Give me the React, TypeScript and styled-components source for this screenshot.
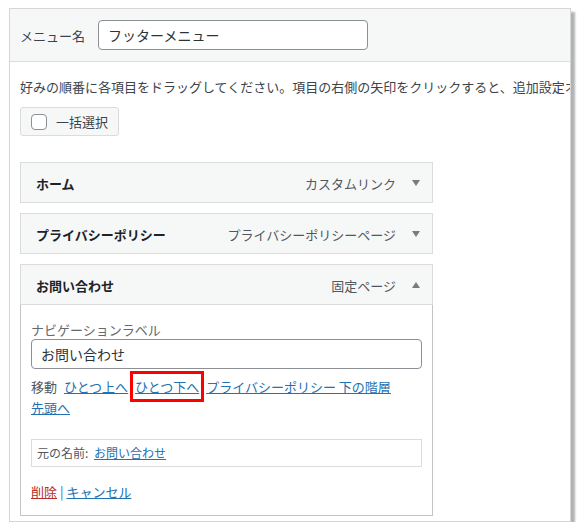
import styled, { createGlobalStyle } from 'styled-components';

const GlobalStyle = createGlobalStyle`
  * { box-sizing: border-box; }
  body {
    margin: 0;
    background: #fff;
    font-family: "Noto Sans CJK JP", "Noto Sans", sans-serif;
    font-size: 13px;
    color: #3c434a;
  }
`;

const items = [
  { title: 'ホーム', type: 'カスタムリンク', open: false },
  { title: 'プライバシーポリシー', type: 'プライバシーポリシーページ', open: false },
  { title: 'お問い合わせ', type: '固定ページ', open: true },
];

export default function App() {
  return (
    <>
      <GlobalStyle />
      <Frame>
        <Header>
          <Label>メニュー名</Label>
          <NameInput defaultValue="フッターメニュー" />
        </Header>

        <Content>
          <Description>
            好みの順番に各項目をドラッグしてください。項目の右側の矢印をクリックすると、追加設定オプションが表示されます。
          </Description>

          <BulkButton>
            <Check />
            <span>一括選択</span>
          </BulkButton>

          <MenuList>
            {items.map((item) => (
              <MenuItem key={item.title}>
                <Handle>
                  <ItemTitle>{item.title}</ItemTitle>
                  <Controls>
                    <span>{item.type}</span>
                    <Arrow $up={item.open} />
                  </Controls>
                </Handle>

                {item.open && (
                  <Settings>
                    <FieldLabel>ナビゲーションラベル</FieldLabel>
                    <LabelInput defaultValue="お問い合わせ" />

                    <MoveRow>
                      <span>移動</span>
                      <Link href="#">ひとつ上へ</Link>
                      <Link href="#" $marked>
                        ひとつ下へ
                      </Link>
                      <Link href="#">プライバシーポリシー 下の階層</Link>
                      <Link href="#">先頭へ</Link>
                    </MoveRow>

                    <Original>
                      元の名前: <Link href="#">お問い合わせ</Link>
                    </Original>

                    <Actions>
                      <Link href="#" $danger>
                        削除
                      </Link>{' '}
                      <Sep>|</Sep> <Link href="#">キャンセル</Link>
                    </Actions>
                  </Settings>
                )}
              </MenuItem>
            ))}
          </MenuList>
        </Content>
      </Frame>
    </>
  );
}

const Frame = styled.div`
  margin: 8px 0 0 9px;
  width: 562px;
  height: 514px;
  border: 1px solid #d6d6d6;
  background: #fff;
  overflow: hidden;
  box-shadow: 4px 4px 2px rgba(0, 0, 0, 0.3);
`;

const Header = styled.div`
  display: flex;
  align-items: center;
  gap: 13px;
  height: 53px;
  padding: 0 10px;
  background: #f6f7f7;
  border-bottom: 1px solid #dcdcde;
`;

const Label = styled.span`
  font-size: 13px;
  color: #3c434a;
`;

const NameInput = styled.input`
  width: 270px;
  height: 30px;
  padding: 0 9px;
  border: 1px solid #8c8f94;
  border-radius: 4px;
  font-family: inherit;
  font-size: 14px;
  color: #2c3338;
  background: #fff;
`;

const Content = styled.div`
  padding: 15px 10px 0;
`;

const Description = styled.p`
  margin: 0;
  line-height: 19px;
  white-space: nowrap;
  color: #3c434a;
`;

const BulkButton = styled.div`
  display: inline-flex;
  align-items: center;
  gap: 9px;
  margin-top: 11px;
  height: 29px;
  padding: 0 10px;
  border: 1px solid #dcdcde;
  border-radius: 3px;
  background: #f6f7f7;
  color: #3c434a;
`;

const Check = styled.span`
  width: 16px;
  height: 16px;
  border: 1px solid #8c8f94;
  border-radius: 4px;
  background: #fff;
`;

const MenuList = styled.div`
  display: flex;
  flex-direction: column;
  gap: 10px;
  width: 413px;
  margin-top: 26px;
`;

const MenuItem = styled.div`
  display: flex;
  flex-direction: column;
`;

const Handle = styled.div`
  display: flex;
  align-items: center;
  justify-content: space-between;
  height: 41px;
  padding: 1px 12px 0 15px;
  border: 1px solid #dcdcde;
  background: #f6f7f7;
`;

const ItemTitle = styled.span`
  font-weight: 700;
  color: #1d2327;
`;

const Controls = styled.span`
  display: flex;
  align-items: center;
  gap: 16px;
  color: #50575e;
`;

const Arrow = styled.span<{ $up?: boolean }>`
  width: 0;
  height: 0;
  border-left: 4px solid transparent;
  border-right: 4px solid transparent;
  ${(p) =>
    p.$up
      ? 'border-bottom: 6px solid #787c82;'
      : 'border-top: 6px solid #787c82;'}
`;

const Settings = styled.div`
  padding: 16px 10px 14px;
  border: 1px solid #c3c4c7;
  border-top: none;
`;

const FieldLabel = styled.div`
  line-height: 18px;
  color: #646970;
`;

const LabelInput = styled.input`
  display: block;
  width: 100%;
  height: 30px;
  padding: 0 9px;
  border: 1px solid #8c8f94;
  border-radius: 4px;
  font-family: inherit;
  font-size: 14px;
  color: #2c3338;
`;

const MoveRow = styled.div`
  display: flex;
  flex-wrap: wrap;
  column-gap: 7px;
  margin-top: 7px;
  line-height: 21px;
  color: #50575e;
`;

const Link = styled.a<{ $marked?: boolean; $danger?: boolean }>`
  color: ${(p) => (p.$danger ? '#b32d2e' : '#2271b1')};
  text-decoration: underline;
  white-space: nowrap;
  ${(p) => p.$marked && 'outline: 3.5px solid #ff0000; outline-offset: 2px;'}
`;

const Original = styled.div`
  margin-top: 21px;
  padding: 4px 5px;
  border: 1px solid #dcdcde;
  font-size: 12px;
  line-height: 18px;
  color: #50575e;

  a {
    margin-left: 3px;
  }
`;

const Actions = styled.div`
  margin-top: 15px;
  line-height: 19px;
`;

const Sep = styled.span`
  color: #2271b1;
`;
